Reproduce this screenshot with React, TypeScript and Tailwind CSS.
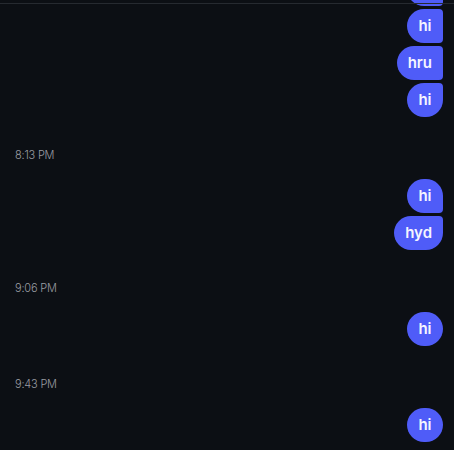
import React from "react";

type Pos = "single" | "first" | "middle" | "last";

const shape: Record<Pos, string> = {
  single: "rounded-[17px]",
  first: "rounded-[17px] rounded-br-[4px]",
  middle: "rounded-l-[17px] rounded-r-[4px]",
  last: "rounded-[17px] rounded-tr-[4px]",
};

type Group = { time?: string; messages: string[] };

// first message of the first group is scrolled mostly out of view
const groups: Group[] = [
  { messages: ["", "hi", "hru", "hi"] },
  { time: "8:13 PM", messages: ["hi", "hyd"] },
  { time: "9:06 PM", messages: ["hi"] },
  { time: "9:43 PM", messages: ["hi"] },
];

function posOf(i: number, n: number): Pos {
  if (n === 1) return "single";
  if (i === 0) return "first";
  if (i === n - 1) return "last";
  return "middle";
}

function Bubble({ text, pos }: { text: string; pos: Pos }) {
  return (
    <div
      className={`h-[34px] min-w-[36px] px-[11px] flex items-center justify-center bg-[#4f5cf8] text-[#f4f4ff] text-[15px] font-semibold ${shape[pos]}`}
    >
      {text}
    </div>
  );
}

export default function App() {
  return (
    <div
      className="relative w-[454px] h-[450px] overflow-hidden bg-[#0c0f14]"
      style={{ fontFamily: "Inter, 'Noto Sans', sans-serif" }}
    >
      <div className="absolute left-0 right-0 top-[3px] h-px bg-[#262a30] z-10" />
      <div className="flex flex-col mt-[-28px]">
        {groups.map((g, gi) => (
          <div key={gi} className="flex flex-col">
            {g.time && (
              <div className="mt-[30px] mb-[16px] h-4 pl-[15px] flex items-center text-[11px] text-[#9a9da3] font-light tracking-[-0.2px]">
                {g.time}
              </div>
            )}
            <div className="flex flex-col items-end gap-[3px] pr-[11px]">
              {g.messages.map((m, i) => (
                <Bubble key={i} text={m} pos={posOf(i, g.messages.length)} />
              ))}
            </div>
          </div>
        ))}
      </div>
    </div>
  );
}
